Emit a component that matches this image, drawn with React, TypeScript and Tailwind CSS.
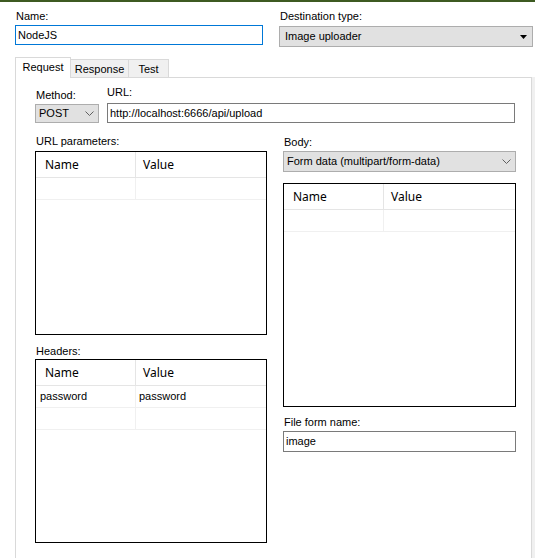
import React from "react";

const font = { fontFamily: '"Liberation Sans", Arial, sans-serif' };

const Label = ({ text, className = "" }: { text: string; className?: string }) => (
  <div className={`text-[11px] leading-[13px] text-black ${className}`}>{text}</div>
);

const TextBox = ({
  value,
  focused,
  className = "",
}: {
  value: string;
  focused?: boolean;
  className?: string;
}) => (
  <div
    className={`flex items-center bg-white border pl-[2px] text-[11px] text-black ${
      focused ? "border-[#0078d7]" : "border-[#7a7a7a]"
    } ${className}`}
  >
    {value}
  </div>
);

const Chevron = () => (
  <svg width="9" height="5" viewBox="0 0 9 5" className="ml-auto mr-[4px]">
    <path d="M0.5 0.5 L4.5 4.5 L8.5 0.5" fill="none" stroke="#606060" strokeWidth="1" />
  </svg>
);

const Combo = ({
  value,
  solidArrow,
  className = "",
}: {
  value: string;
  solidArrow?: boolean;
  className?: string;
}) => (
  <div
    className={`flex items-center bg-[#e1e1e1] border border-[#adadad] text-[11px] text-black ${className}`}
  >
    <span>{value}</span>
    {solidArrow ? (
      <svg width="7" height="4" viewBox="0 0 7 4" className="ml-auto mr-[5px]">
        <path d="M0 0 H7 L3.5 4 Z" fill="#000" />
      </svg>
    ) : (
      <Chevron />
    )}
  </div>
);

const ListView = ({
  rows,
  className = "",
}: {
  rows: [string, string][];
  className?: string;
}) => (
  <div className={`bg-white border border-black overflow-hidden ${className}`}>
    <div
      className="flex h-[26px] border-b border-[#e5e5e5] text-[12px] text-black"
      style={{ fontFamily: '"Noto Sans", "Open Sans", sans-serif' }}
    >
      <div className="w-[100px] border-r border-[#e5e5e5] pl-[9px] flex items-center">Name</div>
      <div className="flex-1 pl-[7px] flex items-center">Value</div>
    </div>
    {rows.map(([name, value], i) => (
      <div key={i} className="flex h-[22px] border-b border-[#f0f0f0] text-[11px] text-black">
        <div className="w-[100px] border-r border-[#f0f0f0] pl-[4px] flex items-center">{name}</div>
        <div className="flex-1 pl-[3px] flex items-center">{value}</div>
      </div>
    ))}
  </div>
);

const App = () => {
  return (
    <div
      className="w-[535px] h-[558px] overflow-hidden bg-white border-t-2 border-[#3d5a21] flex flex-col"
      style={font}
    >
      <div className="flex items-start pl-[15px] pt-[8px]">
        <div className="w-[248px]">
          <Label text="Name:" className="pl-[1px]" />
          <TextBox value="NodeJS" focused className="mt-[2px] h-[20px]" />
        </div>
        <div className="ml-[16px] w-[254px]">
          <Label text="Destination type:" className="pl-[1px]" />
          <Combo value="Image uploader" solidArrow className="mt-[3px] h-[21px] pl-[5px]" />
        </div>
      </div>

      <div className="flex items-end ml-[15px] mt-[10px] h-[20px] text-[11px] text-black">
        <div className="relative z-10 -mb-px h-[21px] w-[56px] bg-white border-l border-t border-r border-[#d9d9d9] pt-[3px] text-center leading-[13px]">
          Request
        </div>
        <div className="h-[18px] w-[58px] bg-[#f0f0f0] border-t border-r border-[#d9d9d9] pt-[3px] text-center leading-[13px]">
          Response
        </div>
        <div className="h-[18px] w-[40px] bg-[#f0f0f0] border-t border-r border-[#d9d9d9] pt-[3px] text-center leading-[13px]">
          Test
        </div>
      </div>

      <div className="flex flex-1 ml-[15px]">
        <div className="w-[517px] border-l border-t border-r border-[#d9d9d9] bg-white pl-[19px] pt-[8px]">
          <div className="flex items-start">
            <div className="w-[64px] pt-[3px]">
              <Label text="Method:" className="pl-[1px]" />
              <Combo value="POST" className="mt-[2px] h-[19px] pl-[3px]" />
            </div>
            <div className="ml-[8px] w-[408px]">
              <Label text="URL:" />
              <TextBox value="http://localhost:6666/api/upload" className="mt-[4px] h-[20px]" />
            </div>
          </div>

          <div className="flex items-start mt-[12px]">
            <div className="w-[232px]">
              <Label text="URL parameters:" className="pl-[1px]" />
              <ListView rows={[["", ""]]} className="mt-[3px] h-[184px]" />
              <Label text="Headers:" className="pl-[1px] mt-[10px]" />
              <ListView
                rows={[
                  ["password", "password"],
                  ["", ""],
                ]}
                className="mt-[1px] h-[184px]"
              />
            </div>
            <div className="ml-[16px] w-[233px]">
              <Label text="Body:" className="pl-[1px] pt-[1px]" />
              <Combo value="Form data (multipart/form-data)" className="mt-[2px] h-[21px] pl-[3px]" />
              <ListView rows={[["", ""]]} className="mt-[11px] h-[224px]" />
              <Label text="File form name:" className="pl-[1px] mt-[9px]" />
              <TextBox value="image" className="mt-[2px] h-[21px]" />
            </div>
          </div>
        </div>
        <div className="flex-1 bg-[#f0f0f0]" />
      </div>
    </div>
  );
};

export default App;
